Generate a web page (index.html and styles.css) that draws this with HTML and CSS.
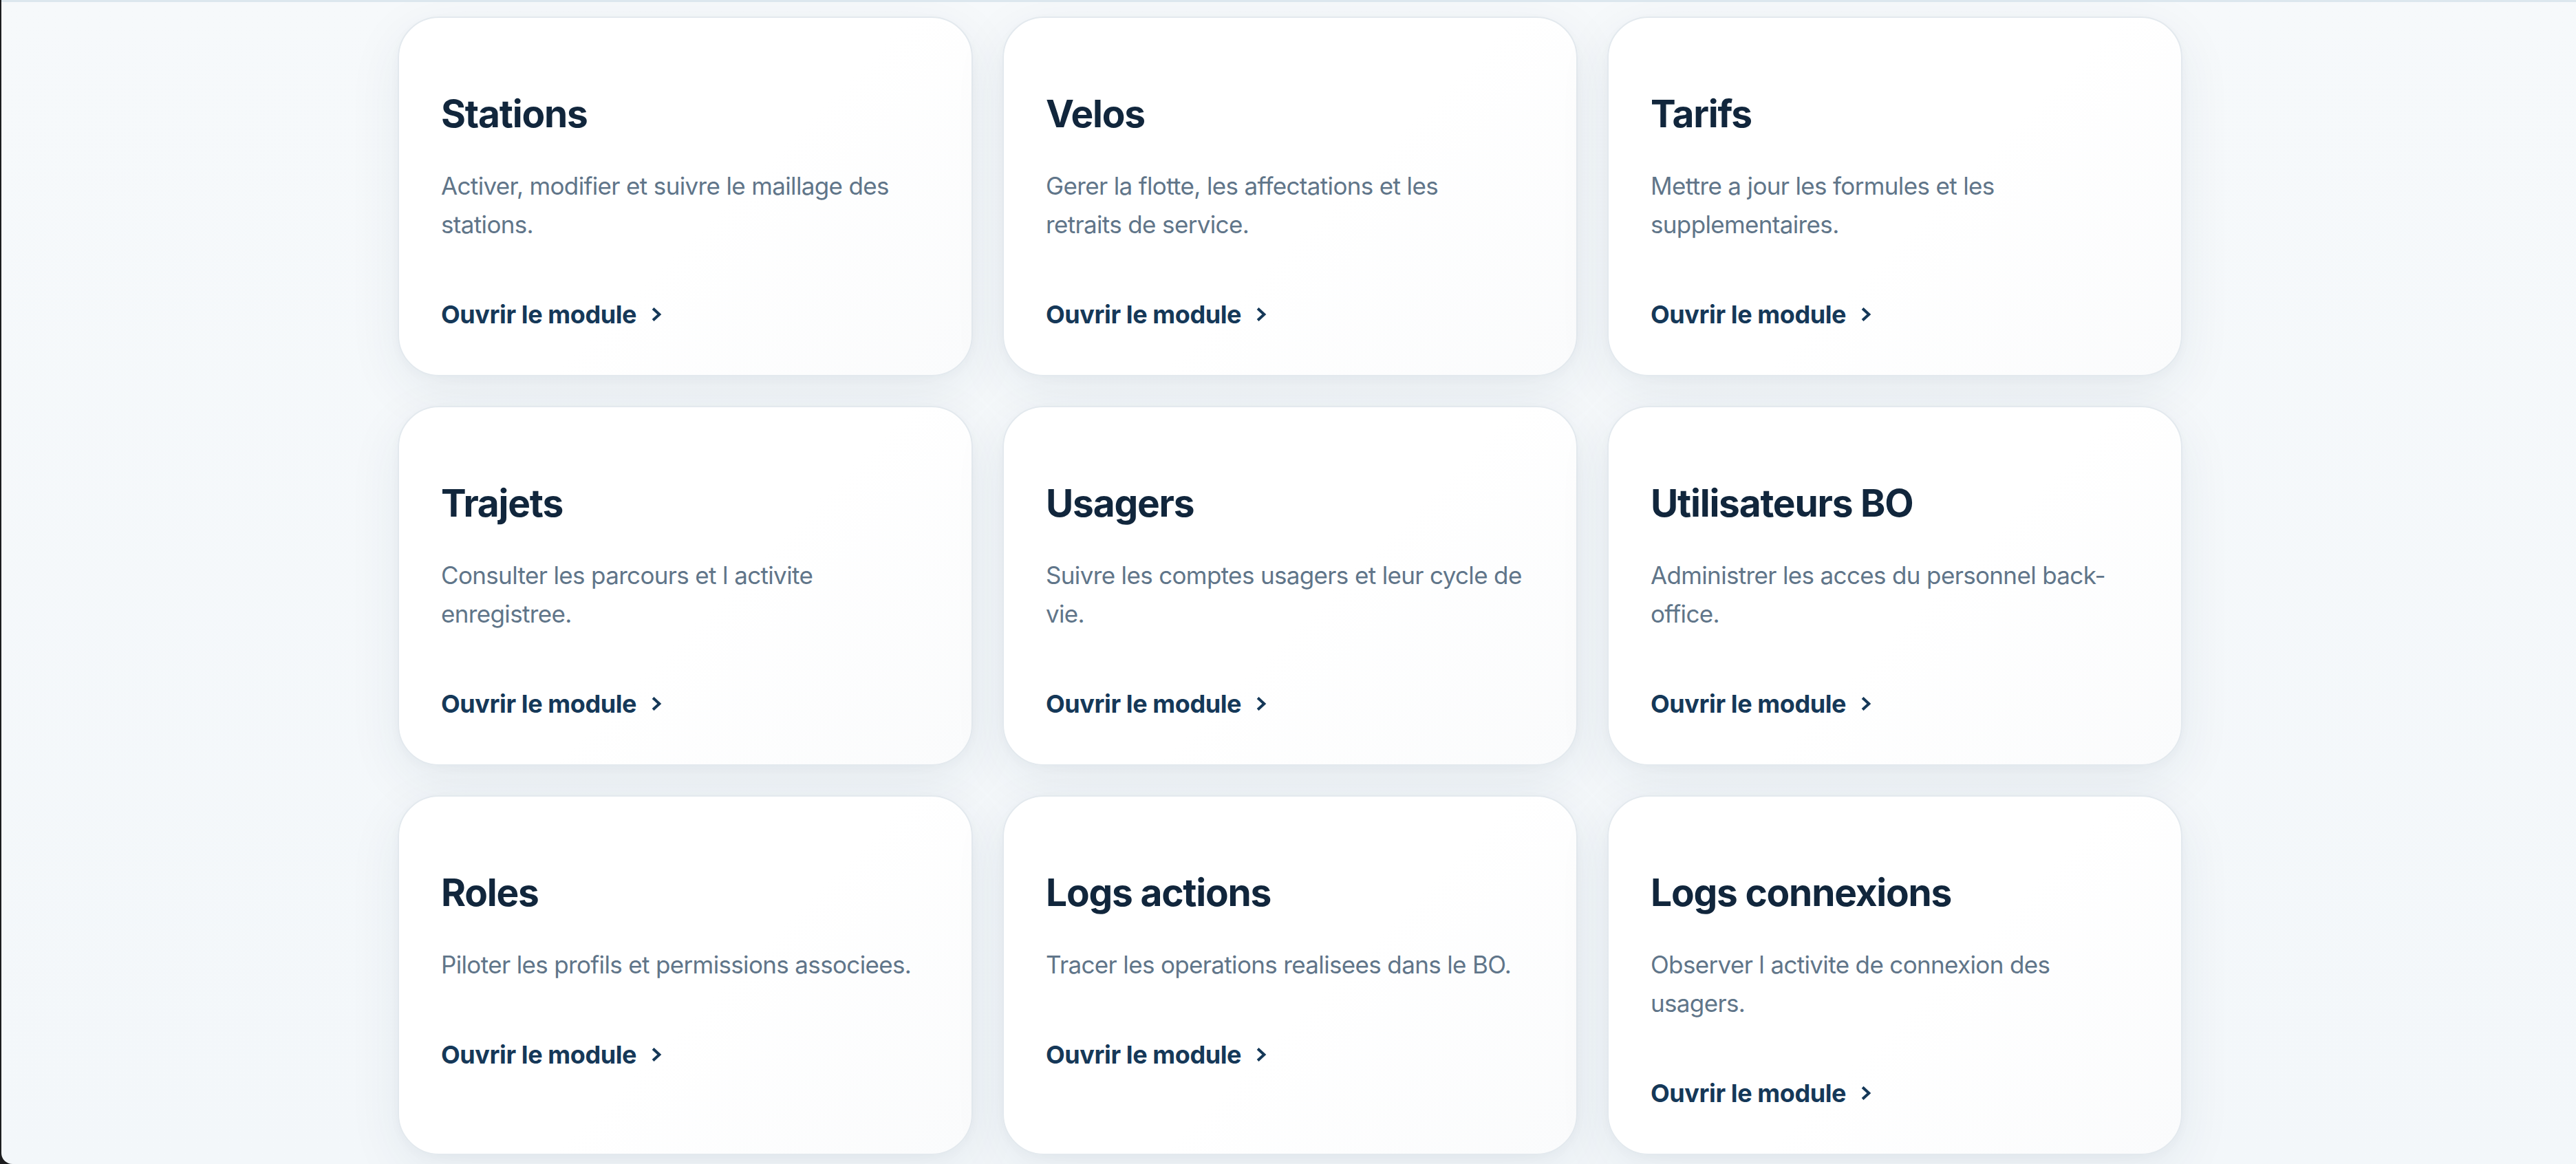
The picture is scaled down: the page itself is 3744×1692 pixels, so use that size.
FILE: index.html
```html
<!DOCTYPE html>
<html lang="fr">
<head>
<meta charset="utf-8">
<title>Modules</title>
<link rel="stylesheet" href="styles.css">
</head>
<body>
<div class="window">
  <main class="grid">
    <article class="card">
      <h2 class="card-title">Stations</h2>
      <p class="card-desc">Activer, modifier et suivre le maillage des stations.</p>
      <a class="card-link" href="#">Ouvrir le module <svg class="chev" viewBox="0 0 14 18"><polyline points="3,2.5 10,9 3,15.5"/></svg></a>
    </article>
    <article class="card">
      <h2 class="card-title">Velos</h2>
      <p class="card-desc">Gerer la flotte, les affectations et les retraits&nbsp;de service.</p>
      <a class="card-link" href="#">Ouvrir le module <svg class="chev" viewBox="0 0 14 18"><polyline points="3,2.5 10,9 3,15.5"/></svg></a>
    </article>
    <article class="card">
      <h2 class="card-title">Tarifs</h2>
      <p class="card-desc">Mettre a jour les formules et les supplementaires.</p>
      <a class="card-link" href="#">Ouvrir le module <svg class="chev" viewBox="0 0 14 18"><polyline points="3,2.5 10,9 3,15.5"/></svg></a>
    </article>
    <article class="card">
      <h2 class="card-title">Trajets</h2>
      <p class="card-desc">Consulter les parcours et l activite enregistree.</p>
      <a class="card-link" href="#">Ouvrir le module <svg class="chev" viewBox="0 0 14 18"><polyline points="3,2.5 10,9 3,15.5"/></svg></a>
    </article>
    <article class="card">
      <h2 class="card-title">Usagers</h2>
      <p class="card-desc">Suivre les comptes usagers et leur cycle de vie.</p>
      <a class="card-link" href="#">Ouvrir le module <svg class="chev" viewBox="0 0 14 18"><polyline points="3,2.5 10,9 3,15.5"/></svg></a>
    </article>
    <article class="card">
      <h2 class="card-title">Utilisateurs BO</h2>
      <p class="card-desc">Administrer les acces du personnel back-office.</p>
      <a class="card-link" href="#">Ouvrir le module <svg class="chev" viewBox="0 0 14 18"><polyline points="3,2.5 10,9 3,15.5"/></svg></a>
    </article>
    <article class="card">
      <h2 class="card-title">Roles</h2>
      <p class="card-desc">Piloter les profils et permissions associees.</p>
      <a class="card-link" href="#">Ouvrir le module <svg class="chev" viewBox="0 0 14 18"><polyline points="3,2.5 10,9 3,15.5"/></svg></a>
    </article>
    <article class="card">
      <h2 class="card-title">Logs actions</h2>
      <p class="card-desc">Tracer les operations realisees dans le BO.</p>
      <a class="card-link" href="#">Ouvrir le module <svg class="chev" viewBox="0 0 14 18"><polyline points="3,2.5 10,9 3,15.5"/></svg></a>
    </article>
    <article class="card">
      <h2 class="card-title">Logs connexions</h2>
      <p class="card-desc">Observer l activite de connexion des usagers.</p>
      <a class="card-link" href="#">Ouvrir le module <svg class="chev" viewBox="0 0 14 18"><polyline points="3,2.5 10,9 3,15.5"/></svg></a>
    </article>
  </main>
</div>
</body>
</html>
```
FILE: styles.css
```css
* { box-sizing: border-box; }
html, body {
  margin: 0;
  padding: 0;
  height: 100%;
  overflow: hidden;
}
body {
  background: #1c1d1f;
  font-family: Inter, "Noto Sans", "Liberation Sans", sans-serif;
}
.window {
  height: 1692px;
  margin-left: 2px;
  border-top: 3px solid #dce7ee;
  border-bottom-left-radius: 16px;
  background: linear-gradient(180deg, #f6f9fb 0%, #f3f7fa 100%);
  overflow: hidden;
}
.grid {
  width: 2594px;
  margin: 0 0 0 576px;
  padding-top: 21px;
  display: grid;
  grid-template-columns: repeat(3, 836px);
  column-gap: 43px;
  row-gap: 43px;
}
.card {
  background: linear-gradient(135deg, #ffffff 55%, #fafbfc 100%);
  border: 2px solid #e3e9ee;
  border-radius: 60px;
  padding: 106px 50px 66px 61px;
  box-shadow: 0 22px 80px rgba(25, 50, 80, 0.07), 0 4px 14px rgba(25, 50, 80, 0.03);
  display: flex;
  flex-direction: column;
  align-items: flex-start;
}
.card-title {
  margin: 0;
  font-size: 55px;
  line-height: 66px;
  font-weight: 700;
  color: #11263c;
  letter-spacing: -1.2px;
}
.card-desc {
  margin: 44px 0 0;
  font-size: 35px;
  line-height: 56px;
  font-weight: 400;
  color: #607589;
  letter-spacing: -0.65px;
}
.card-link {
  margin-top: 81px;
  font-size: 36px;
  line-height: 44px;
  font-weight: 700;
  color: #153858;
  text-decoration: none;
  letter-spacing: -0.4px;
  display: inline-flex;
  align-items: center;
  gap: 22px;
}
.chev {
  width: 16px;
  height: 20px;
  fill: none;
  stroke: #153858;
  stroke-width: 3.6;
  stroke-linecap: square;
  stroke-linejoin: miter;
}
```
